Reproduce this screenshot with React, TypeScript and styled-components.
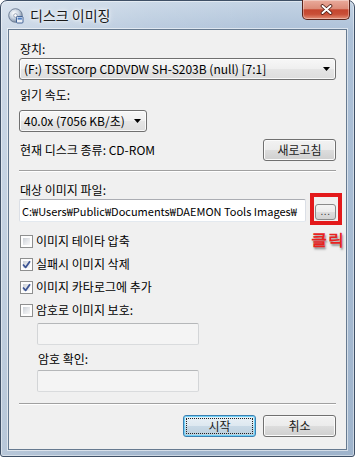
import React from 'react';
import styled, { createGlobalStyle } from 'styled-components';

const GlobalStyle = createGlobalStyle`
  html, body {
    margin: 0;
    padding: 0;
    background: #ffffff;
  }
  body {
    font-family: "Noto Sans CJK KR", "Liberation Sans", sans-serif;
    font-size: 12px;
    color: #000000;
  }
  * {
    box-sizing: border-box;
  }
`;

const Window = styled.div`
  width: 355px;
  height: 457px;
  display: flex;
  flex-direction: column;
  padding: 0 7px 6px;
  border: 1px solid #3f5066;
  border-radius: 7px 7px 3px 3px;
  background:
    linear-gradient(100deg, rgba(255, 255, 255, 0.4) 0%, rgba(255, 255, 255, 0.14) 35%, rgba(255, 255, 255, 0) 65%),
    linear-gradient(to bottom, #c3d3e4 0%, #adc1d8 7%, #9fb4cc 100%);
  box-shadow: inset 0 0 0 1px rgba(255, 255, 255, 0.45);
`;

const TitleBar = styled.div`
  height: 28px;
  flex-shrink: 0;
  display: flex;
  align-items: flex-start;
`;

const TitleIcon = styled.svg`
  width: 16px;
  height: 16px;
  margin-top: 7px;
  flex-shrink: 0;
`;

const TitleText = styled.span`
  margin: 6px 0 0 6px;
  font-size: 14px;
  line-height: 16px;
  color: #1a1a1a;
  text-shadow: 0 0 6px #ffffff, 0 0 3px #ffffff;
`;

const CloseButton = styled.div`
  margin: -1px -3px 0 auto;
  width: 48px;
  height: 20px;
  border: 1px solid #5a241b;
  border-top: none;
  border-radius: 0 0 5px 5px;
  background: linear-gradient(to bottom, #e9ab9c 0%, #dc8c79 45%, #c5462f 52%, #c94f37 75%, #e49078 100%);
  box-shadow: inset 0 0 0 1px rgba(255, 255, 255, 0.35);
  display: flex;
  align-items: center;
  justify-content: center;
`;

const Client = styled.div`
  flex: 1;
  display: flex;
  flex-direction: column;
  padding: 12px 10px 0;
  background: #f0f0f0;
  border: 1px solid #667a90;
  box-shadow: 0 0 0 1px rgba(255, 255, 255, 0.55);
`;

const Label = styled.div<{ $top?: number; $indent?: number }>`
  margin-top: ${p => p.$top ?? 0}px;
  padding-left: ${p => (p.$indent ?? 0) + 1}px;
  height: 14px;
  line-height: 14px;
  white-space: nowrap;
`;

const Combo = styled.div<{ $width?: number; $top: number }>`
  margin-top: ${p => p.$top}px;
  width: ${p => (p.$width ? `${p.$width}px` : '100%')};
  height: 22px;
  display: flex;
  align-items: center;
  padding: 0 5px 0 4px;
  border: 1px solid #707070;
  border-radius: 3px;
  background: linear-gradient(to bottom, #f7f7f7 0%, #efefef 50%, #e5e5e5 51%, #dddddd 100%);
  box-shadow: inset 0 0 0 1px rgba(255, 255, 255, 0.8);
  line-height: 16px;
  white-space: nowrap;
`;

const ComboArrow = styled.svg`
  width: 7px;
  height: 4px;
  margin-left: auto;
  flex-shrink: 0;
`;

const InfoRow = styled.div`
  margin-top: 7px;
  display: flex;
  align-items: center;
  justify-content: space-between;
  padding-left: 1px;
  line-height: 14px;
`;

const PushButton = styled.div<{ $default?: boolean }>`
  position: relative;
  width: 73px;
  height: 22px;
  display: flex;
  align-items: center;
  justify-content: center;
  border: 1px solid ${p => (p.$default ? '#3c7fb1' : '#707070')};
  border-radius: 3px;
  background: ${p =>
    p.$default
      ? 'linear-gradient(to bottom, #eaf1f6 0%, #dde8f0 50%, #c8d9e6 51%, #bccfdd 100%)'
      : 'linear-gradient(to bottom, #f2f2f2 0%, #ebebeb 50%, #dddddd 51%, #cfcfcf 100%)'};
  box-shadow: inset 0 0 0 1px ${p => (p.$default ? '#6fd1f7' : '#fbfbfb')};
  line-height: 14px;
  color: #1b1b1b;

  &::after {
    content: '';
    display: ${p => (p.$default ? 'block' : 'none')};
    position: absolute;
    inset: 2px;
    border: 1px dotted #222222;
    border-radius: 1px;
  }
`;

const Separator = styled.div<{ $top: number }>`
  margin-top: ${p => p.$top}px;
  height: 2px;
  border-top: 1px solid #a0a0a0;
  border-bottom: 1px solid #ffffff;
`;

const PathRow = styled.div`
  margin-top: 2px;
  height: 23px;
  display: flex;
  align-items: stretch;
  gap: 9px;
`;

const TextBox = styled.input<{ $width?: number; $indent?: number; $top?: number }>`
  margin: ${p => p.$top ?? 0}px 0 0 ${p => p.$indent ?? 0}px;
  width: ${p => (p.$width ? `${p.$width}px` : 'auto')};
  flex: ${p => (p.$width ? '0 0 auto' : '1')};
  min-width: 0;
  height: ${p => (p.$width ? '22px' : 'auto')};
  padding: 0 2px;
  font-family: inherit;
  font-size: 11px;
  color: #000000;
  background: ${p => (p.disabled ? '#f4f4f4' : '#ffffff')};
  border: 1px solid;
  border-color: ${p => (p.disabled ? '#b5b7b9 #d3d5d7 #d9dbdd' : '#abadb3 #dbdfe6 #e3e9ef')};
  border-radius: 2px;
  outline: none;
`;

const BrowseButton = styled.div`
  position: relative;
  align-self: flex-end;
  margin-bottom: 2px;
  width: 21px;
  height: 16px;
  display: flex;
  align-items: flex-end;
  justify-content: center;
  padding-bottom: 4px;
  border: 1px solid #8a8a8a;
  border-radius: 3px;
  background: linear-gradient(to bottom, #f4f4f4 0%, #ebebeb 50%, #dddddd 51%, #d2d2d2 100%);
  font-family: "Liberation Sans", sans-serif;
  font-size: 10px;
  line-height: 6px;
  letter-spacing: 0.5px;
  color: #333333;

  &::after {
    content: '';
    position: absolute;
    left: -6px;
    right: -7px;
    top: -12px;
    bottom: -6px;
    border: 4px solid #e3191b;
  }
`;

const ClickNote = styled.span`
  position: absolute;
  top: 25px;
  left: -5px;
  font-size: 16px;
  font-weight: 700;
  line-height: 20px;
  color: #e8231f;
  white-space: nowrap;
  text-shadow: 1px 2px 2px rgba(60, 60, 60, 0.55);
`;

const CheckList = styled.div`
  margin-top: 11px;
  display: flex;
  flex-direction: column;
  gap: 7px;
`;

const CheckRow = styled.label`
  height: 16px;
  display: flex;
  align-items: center;
  gap: 3px;
  padding-left: 1px;
  line-height: 14px;
  white-space: nowrap;
`;

const Box = styled.span`
  position: relative;
  width: 13px;
  height: 13px;
  flex-shrink: 0;
  border: 1px solid #8e8f8f;
  padding: 2px;
  background: linear-gradient(135deg, #cbd0d6 0%, #e6e8eb 55%, #f7f7f7 100%) content-box, #fdfdfd;

  svg {
    position: absolute;
    left: 1px;
    top: 1px;
  }
`;

const ButtonRow = styled.div`
  margin-top: 10px;
  display: flex;
  justify-content: flex-end;
  gap: 7px;
`;

function Checkbox({ checked, text }: { checked?: boolean; text: string }) {
  return (
    <CheckRow>
      <Box>
        {checked && (
          <svg width="9" height="9" viewBox="0 0 9 9">
            <path d="M1 4.5 L3.6 7.4 L8 1.2" fill="none" stroke="#3d5594" strokeWidth="1.8" strokeLinejoin="round" />
          </svg>
        )}
      </Box>
      {text}
    </CheckRow>
  );
}

function DownArrow() {
  return (
    <ComboArrow viewBox="0 0 7 4">
      <polygon points="0,0 7,0 3.5,4" fill="#000000" />
    </ComboArrow>
  );
}

export default function App() {
  return (
    <>
      <GlobalStyle />
      <Window>
        <TitleBar>
          <TitleIcon viewBox="0 0 16 16">
            <defs>
              <radialGradient id="disc" cx="40%" cy="35%" r="70%">
                <stop offset="0" stopColor="#ffffff" />
                <stop offset="0.5" stopColor="#c8d3e0" />
                <stop offset="1" stopColor="#6f819a" />
              </radialGradient>
            </defs>
            <circle cx="7.5" cy="7.5" r="6.8" fill="url(#disc)" stroke="#5d6f88" strokeWidth="0.8" />
            <circle cx="7.5" cy="7.5" r="1.8" fill="#ffffff" stroke="#7b8aa0" strokeWidth="0.7" />
            <rect x="8.5" y="8.5" width="6.5" height="6.5" rx="1" fill="#e9eff6" stroke="#36588f" strokeWidth="0.9" />
            <rect x="9.6" y="9.6" width="4.3" height="2" fill="#4f7fc4" />
          </TitleIcon>
          <TitleText>디스크 이미징</TitleText>
          <CloseButton>
            <svg width="13" height="11" viewBox="0 0 13 11">
              <path d="M2.5 2 L10.5 9 M10.5 2 L2.5 9" stroke="#4a1a12" strokeWidth="3.6" strokeLinecap="round" />
              <path d="M2.5 2 L10.5 9 M10.5 2 L2.5 9" stroke="#ffffff" strokeWidth="2" strokeLinecap="round" />
            </svg>
          </CloseButton>
        </TitleBar>

        <Client>
          <Label>장치:</Label>
          <Combo $top={2}>
            (F:) TSSTcorp CDDVDW SH-S203B (null) [7:1]
            <DownArrow />
          </Combo>

          <Label $top={8}>읽기 속도:</Label>
          <Combo $top={8} $width={128}>
            40.0x (7056 KB/초)
            <DownArrow />
          </Combo>

          <InfoRow>
            <span>현재 디스크 종류: CD-ROM</span>
            <PushButton>새로고침</PushButton>
          </InfoRow>

          <Separator $top={9} />

          <Label $top={11}>대상 이미지 파일:</Label>
          <PathRow>
            <TextBox readOnly value="C:₩Users₩Public₩Documents₩DAEMON Tools Images₩" />
            <BrowseButton>
              ...
              <ClickNote>클릭</ClickNote>
            </BrowseButton>
          </PathRow>

          <CheckList>
            <Checkbox text="이미지 테이타 압축" />
            <Checkbox checked text="실패시 이미지 삭제" />
            <Checkbox checked text="이미지 카타로그에 추가" />
            <Checkbox text="암호로 이미지 보호:" />
          </CheckList>

          <TextBox disabled $width={162} $indent={18} $top={5} />
          <Label $top={7} $indent={18}>암호 확인:</Label>
          <TextBox disabled $width={162} $indent={18} $top={4} />

          <Separator $top={11} />

          <ButtonRow>
            <PushButton $default>시작</PushButton>
            <PushButton>취소</PushButton>
          </ButtonRow>
        </Client>
      </Window>
    </>
  );
}
